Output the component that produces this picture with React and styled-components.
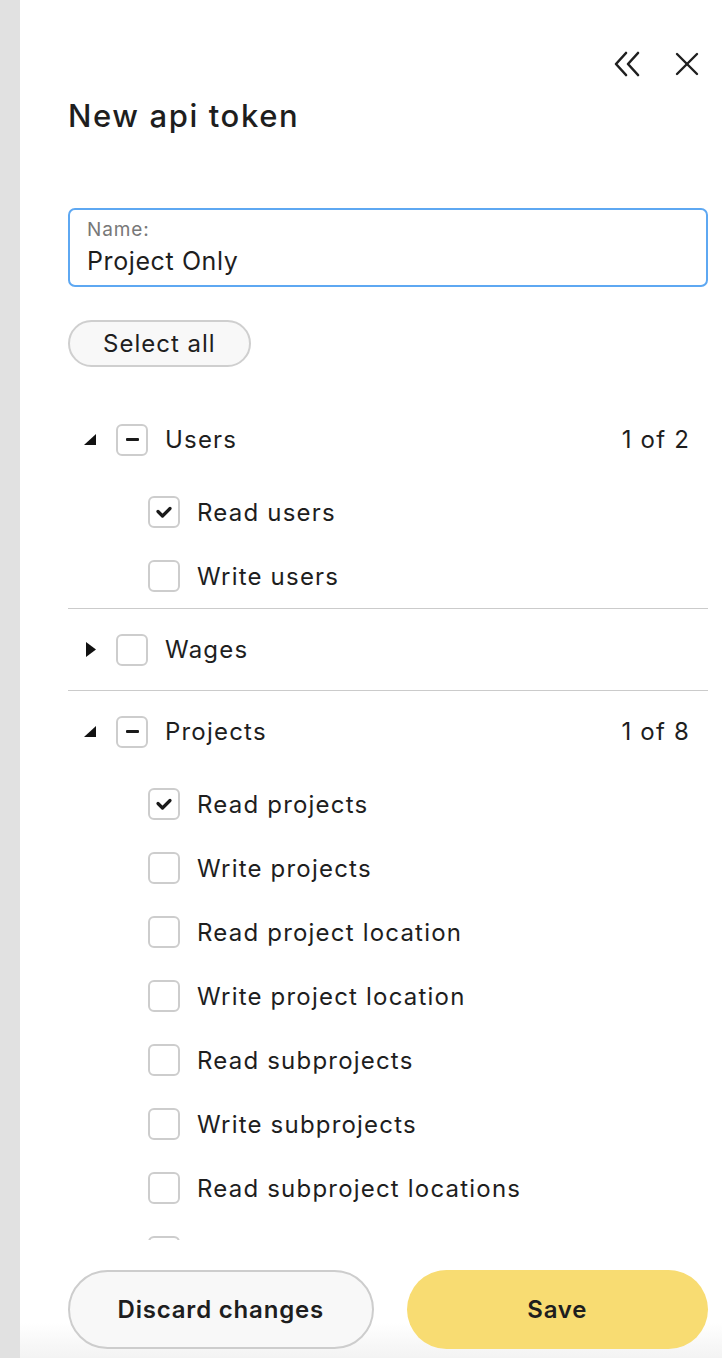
import React from 'react'
import styled, { createGlobalStyle } from 'styled-components'

const Global = createGlobalStyle`
  html, body { margin: 0; padding: 0; }
  body {
    font-family: Inter, "Noto Sans", sans-serif;
    color: #222;
    background: #fff;
  }
  * { box-sizing: border-box; }
`

const groups = [
  {
    name: 'Users',
    open: true,
    state: 'some',
    count: '1 of 2',
    items: [
      { label: 'Read users', checked: true },
      { label: 'Write users' },
    ],
  },
  { name: 'Wages', open: false, state: 'none', items: [] },
  {
    name: 'Projects',
    open: true,
    state: 'some',
    count: '1 of 8',
    items: [
      { label: 'Read projects', checked: true },
      { label: 'Write projects' },
      { label: 'Read project location' },
      { label: 'Write project location' },
      { label: 'Read subprojects' },
      { label: 'Write subprojects' },
      { label: 'Read subproject locations' },
      // scrolled under the footer, only the box top shows
      { label: '' },
    ],
  },
]

const DoubleChevron = () => (
  <svg width="28" height="26" viewBox="0 0 28 26" fill="none" stroke="#1f1f1f" strokeWidth="2.6" strokeLinecap="round" strokeLinejoin="round">
    <path d="M13 2 L3 13 L13 24" />
    <path d="M25 2 L15 13 L25 24" />
  </svg>
)

const CloseIcon = () => (
  <svg width="24" height="24" viewBox="0 0 24 24" fill="none" stroke="#1f1f1f" strokeWidth="2.4" strokeLinecap="round">
    <path d="M2 2 L22 22" />
    <path d="M22 2 L2 22" />
  </svg>
)

const Caret = ({ open }) =>
  open ? (
    <svg width="12" height="11" viewBox="0 0 12 11">
      <polygon points="12,0 12,11 0,11" fill="#111" />
    </svg>
  ) : (
    <svg width="10" height="15" viewBox="0 0 10 15">
      <polygon points="0,0 10,7.5 0,15" fill="#111" />
    </svg>
  )

const Checkbox = ({ state }) => (
  <Box>
    {state === 'checked' && (
      <svg width="18" height="14" viewBox="0 0 18 14" fill="none" stroke="#1a1a1a" strokeWidth="3.2" strokeLinecap="round" strokeLinejoin="round">
        <path d="M3 6.5 L7.5 11 L15 3.5" />
      </svg>
    )}
    {state === 'some' && <Dash />}
  </Box>
)

const App = () => {
  return (
    <>
      <Global />
      <Page>
        <Strip />
        <Panel>
          <TopBar>
            <IconButton><DoubleChevron /></IconButton>
            <IconButton><CloseIcon /></IconButton>
          </TopBar>
          <Title>New api token</Title>
          <Body>
            <Field>
              <FieldLabel>Name:</FieldLabel>
              <FieldValue>Project Only</FieldValue>
            </Field>
            <SelectAll>Select all</SelectAll>
            <List>
              {groups.map((g, i) => (
                <Group key={g.name} $first={i === 0}>
                  <GroupHead>
                    <CaretSlot><Caret open={g.open} /></CaretSlot>
                    <Checkbox state={g.state} />
                    <Label>{g.name}</Label>
                    {g.count && <Count>{g.count}</Count>}
                  </GroupHead>
                  {g.open &&
                    g.items.map((it, j) => (
                      <Item key={j}>
                        <Checkbox state={it.checked ? 'checked' : 'none'} />
                        {it.label && <Label>{it.label}</Label>}
                      </Item>
                    ))}
                </Group>
              ))}
            </List>
          </Body>
          <Footer>
            <DiscardButton>Discard changes</DiscardButton>
            <SaveButton>Save</SaveButton>
          </Footer>
        </Panel>
      </Page>
    </>
  )
}

export default App

const Page = styled.div`
  display: flex;
  height: 100vh;
  overflow: hidden;
`

const Strip = styled.div`
  width: 20px;
  flex-shrink: 0;
  background: #e1e1e1;
`

const Panel = styled.div`
  flex: 1;
  display: flex;
  flex-direction: column;
  padding: 0 14px 0 48px;
  min-width: 0;
`

const TopBar = styled.div`
  display: flex;
  justify-content: flex-end;
  align-items: center;
  gap: 34px;
  height: 40px;
  margin-top: 44px;
  padding-right: 9px;
`

const IconButton = styled.button`
  border: none;
  background: none;
  padding: 0;
  display: flex;
  align-items: center;
  cursor: pointer;
`

const Title = styled.h1`
  margin: 14px 0 0;
  font-size: 31px;
  line-height: 36px;
  font-weight: 500;
  letter-spacing: 1.6px;
  color: #1e1e1e;
`

const Body = styled.div`
  flex: 1;
  min-height: 0;
  overflow: hidden;
  padding-top: 74px;
`

const Field = styled.div`
  height: 79px;
  border: 2px solid #5ea8f2;
  border-radius: 7px;
  padding: 9px 17px 0;
`

const FieldLabel = styled.div`
  font-size: 19px;
  line-height: 22px;
  letter-spacing: 0.9px;
  color: #787878;
`

const FieldValue = styled.div`
  font-size: 25px;
  line-height: 32px;
  margin-top: 4px;
  letter-spacing: 0.6px;
  color: #1e1e1e;
`

const SelectAll = styled.button`
  margin-top: 33px;
  height: 47px;
  padding: 0 33px;
  border: 2px solid #cfcfcf;
  border-radius: 24px;
  background: #f8f8f8;
  font-family: inherit;
  font-size: 24px;
  letter-spacing: 1px;
  color: #1e1e1e;
  cursor: pointer;
`

const List = styled.div`
  margin-top: 32px;
`

const Group = styled.div`
  border-top: ${(p) => (p.$first ? 'none' : '1px solid #cbcbcb')};
`

const GroupHead = styled.div`
  display: flex;
  align-items: center;
  height: 81px;
  padding-right: 18px;
`

const CaretSlot = styled.div`
  width: 48px;
  display: flex;
  justify-content: flex-end;
  padding-right: 20px;
  align-items: center;
`

const Item = styled.div`
  display: flex;
  align-items: center;
  height: 64px;
  padding-left: 80px;
`

const Box = styled.span`
  width: 32px;
  height: 32px;
  flex-shrink: 0;
  border: 2px solid #cdcdcd;
  border-radius: 6px;
  background: #fff;
  display: flex;
  align-items: center;
  justify-content: center;
`

const Dash = styled.span`
  width: 13px;
  height: 3px;
  border-radius: 1px;
  background: #1a1a1a;
`

const Label = styled.span`
  margin-left: 17px;
  font-size: 24px;
  letter-spacing: 1.2px;
  color: #1e1e1e;
  flex: 1;
`

const Count = styled.span`
  font-size: 24px;
  letter-spacing: 1.2px;
  color: #1e1e1e;
`

const Footer = styled.div`
  display: flex;
  gap: 33px;
  padding: 30px 14px 9px 48px;
  margin: 0 -14px 0 -48px;
  background: linear-gradient(to bottom, #fff 70%, #f3f3f3);
`

const BaseButton = styled.button`
  flex: 1;
  height: 79px;
  border-radius: 40px;
  font-family: inherit;
  font-size: 24px;
  font-weight: 600;
  letter-spacing: 0.8px;
  color: #1e1e1e;
  cursor: pointer;
`

const DiscardButton = styled(BaseButton)`
  border: 2px solid #cdcdcd;
  background: #f8f8f8;
`

const SaveButton = styled(BaseButton)`
  border: none;
  background: #f8dc72;
`
